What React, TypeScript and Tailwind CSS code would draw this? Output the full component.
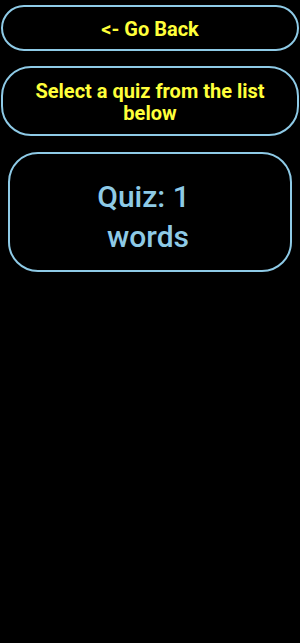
export default function App() {
  return (
    <div className="min-h-[643px] w-full bg-black px-[1px] pt-[5px] font-['Roboto',sans-serif]">
      <button className="block h-[46px] w-full rounded-full border-2 border-[#8ecae6] pt-[2px] text-[20px] font-bold text-[#ffff3a]">
        &lt;- Go Back
      </button>
      <button className="mt-[15px] block h-[70px] w-full rounded-[30px] border-2 border-[#8ecae6] px-4 pt-[2px] text-[20px] font-bold leading-[22px] text-[#ffff3a]">
        Select a quiz from the list below
      </button>
      <div className="mx-[7px] mt-[16px] flex h-[120px] flex-col items-center justify-center rounded-[30px] border-2 border-[#8ecae6] pt-[10px] text-[30px] font-medium leading-[40px] text-[#8ecae6]">
        <span className="pr-[13px]">Quiz: 1</span>
        <span className="pr-[4px]">words</span>
      </div>
    </div>
  );
}
